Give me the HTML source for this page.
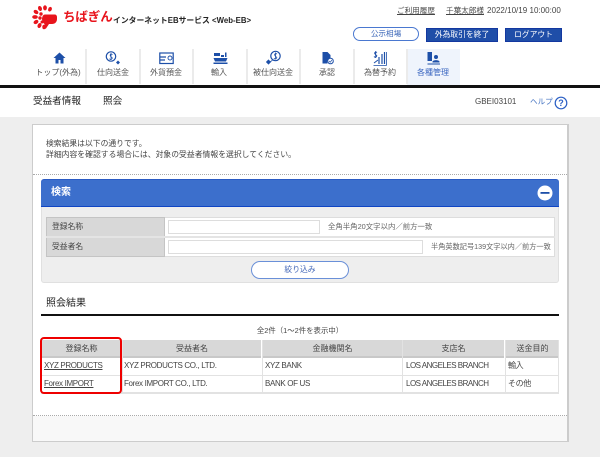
<!DOCTYPE html>
<html lang="ja"><head><meta charset="utf-8"><style>
html,body{margin:0;padding:0}
body{width:600px;height:457px;overflow:hidden;background:#eee;position:relative;font-family:"Liberation Sans","Noto Sans CJK JP",sans-serif;color:#444}
div,span,a,svg{position:absolute;box-sizing:border-box}
#w{left:0;top:0;width:600px;height:457px;filter:blur(.3px);background:#eee}
.t{white-space:nowrap;line-height:12px;font-size:8px}
.c{text-align:center}
.sep{width:2px;top:49px;height:35px;background:#ebebeb}
.nav{top:67px;width:54px;text-align:center;font-size:8px;line-height:12px;white-space:nowrap;color:#555}
.th{background:#d8d8d8;height:18px;top:340px;border-bottom:2px solid #c8c8c8;text-align:center;font-size:8px;line-height:17px;color:#444}
.hl{height:1px;background:#e2e2e2}
.vl{width:1px;background:#e2e2e2}
.td{white-space:nowrap;font-size:8px;line-height:12px;letter-spacing:-.35px;color:#444}
a{color:#2f5f9f;text-decoration:underline}
</style></head><body><div id="w">
<div style="left:0;top:0;width:600px;height:117px;background:#fff"></div>

<svg style="left:32px;top:5px" width="26" height="25" viewBox="0 0 26 25"><g fill="#e8141c"><ellipse cx="8" cy="3.500" rx="1.900" ry="2.600" transform="rotate(-20 8 3.500)"/><ellipse cx="13" cy="2.800" rx="1.900" ry="2.600"/><ellipse cx="4" cy="7" rx="2.600" ry="1.900" transform="rotate(35 4 7)"/><ellipse cx="18" cy="4.200" rx="1.800" ry="2.400" transform="rotate(25 18 4.200)"/><ellipse cx="3" cy="12" rx="2.800" ry="1.900"/><ellipse cx="4" cy="17" rx="2.600" ry="1.900" transform="rotate(-30 4 17)"/><ellipse cx="7.500" cy="20.500" rx="1.900" ry="2.600" transform="rotate(25 7.500 20.500)"/><ellipse cx="12" cy="22" rx="1.700" ry="2.300"/><circle cx="9" cy="9" r="1.700"/><circle cx="8" cy="13" r="1.700"/><circle cx="10" cy="17" r="1.500"/><path d="M13 9.500h9.500c1.500 0 2.500 1 2.500 2.500v2c0 3-2 5-5 5h-3l-3 4.500c-1 .6-1.500 0-1.500-1V19c-1.500-1-2.500-3-2.500-5s1-4.500 3-4.500z"/></g></svg>
<div class="t" style="left:63px;top:9px;font-size:12.500px;line-height:16px;font-weight:700;color:#e8141c;letter-spacing:-.1px">ちばぎん</div>
<div class="t" style="left:113px;top:15px;font-size:7.800px;color:#222;font-weight:700;letter-spacing:.02px">インターネットEBサービス &lt;Web-EB&gt;</div>

<div class="t" style="left:397px;top:5px;font-size:7.600px;text-decoration:underline">ご利用履歴</div>
<div class="t" style="left:446px;top:5px;font-size:7.600px;text-decoration:underline">千葉太郎様</div>
<div class="t" style="left:487px;top:5px;font-size:8px;letter-spacing:.02px">2022/10/19 10:00:00</div>

<div class="t c" style="left:353px;top:27px;width:66px;height:14px;border:1px solid #4a78d0;border-radius:7px;background:#fff;color:#3a66b8;line-height:12px;font-size:7.600px">公示相場</div>
<div class="t c" style="left:426px;top:28px;width:72px;height:14px;background:#1f4ea8;border:1px solid #1338a0;color:#fff;line-height:12px;font-size:7.800px">外為取引を終了</div>
<div class="t c" style="left:505px;top:28px;width:57px;height:14px;background:#1f4ea8;border:1px solid #1338a0;color:#fff;line-height:12px;font-size:7.800px">ログアウト</div>

<div style="left:407px;top:49px;width:53px;height:36px;background:#eff4fc"></div>
<div class="sep" style="left:85px"></div><div class="sep" style="left:139px"></div><div class="sep" style="left:192px"></div><div class="sep" style="left:246px"></div><div class="sep" style="left:299px"></div><div class="sep" style="left:353px"></div><div class="sep" style="left:406px"></div>

<svg style="left:53px;top:52px" width="13" height="12" viewBox="0 0 13 12"><path d="M6.500 .5L.5 6h2v5.500h3V8h2v3.500h3V6h2z" fill="#1d4fa8"/></svg>
<svg style="left:105px;top:50px" width="16" height="16" viewBox="0 0 16 16" fill="none" stroke="#1d4fa8"><circle cx="6" cy="6.500" r="4.700" stroke-width="1.200"/><path d="M7.500 4.500C6 3.600 4.500 4.500 5.500 6.200s2.500 1 1.500 2.500-2.300.5-2.500 0M6 3v7" stroke-width=".8"/><path d="M13 10.500l2 2-2 2-2-2z" fill="#1d4fa8" stroke="none"/></svg>
<svg style="left:159px;top:52px" width="15" height="13" viewBox="0 0 15 13" fill="none" stroke="#1d4fa8" stroke-width="1.200"><rect x=".8" y="1" width="13.400" height="10.500"/><path d="M1 5h6M1 8h5"/><circle cx="11" cy="6" r="2" stroke-width=".9"/></svg>
<svg style="left:213px;top:51px" width="15" height="14" viewBox="0 0 15 14" fill="#1d4fa8"><path d="M1 2h6v3H1zM8 4h3v2H8zM12 1.500h1.500V6H12zM.5 7h14l-1.500 3.500H2zM.5 11.500h14V13H.5z"/></svg>
<svg style="left:266px;top:50px" width="15" height="16" viewBox="0 0 15 16" fill="none" stroke="#1d4fa8"><circle cx="9.500" cy="6" r="4.700" stroke-width="1.200"/><path d="M11 4C9.500 3 8 4 9 5.700s2.500 1 1.500 2.500-2.300.5-2.500 0M9.500 2.500v7" stroke-width=".8"/><path d="M2.500 10l2 2-2 2-2-2zM4 12l2.500-1.800" fill="#1d4fa8" stroke="#1d4fa8" stroke-width=".8"/></svg>
<svg style="left:322px;top:51px" width="12" height="14" viewBox="0 0 12 14"><path d="M.5 1h5l3 3v3a4 4 0 0 0-3 5.500H.5z" fill="#1d4fa8"/><circle cx="8.500" cy="10" r="2.800" fill="#fff" stroke="#1d4fa8"/><path d="M7 10l1.200 1.200L10 9" stroke="#1d4fa8" stroke-width=".7" fill="none"/></svg>
<svg style="left:373px;top:50px" width="14" height="16" viewBox="0 0 14 16" fill="none" stroke="#1d4fa8"><path d="M.5 15.500h13M13.500 15.500V2" stroke-width=".8"/><path d="M6 14V7M9 14V4M11.500 14V2" stroke-width="1.200"/><path d="M1 13l4-3" stroke-width="1"/><path d="M4 2.500C2.500 1.500 1 2.500 2 4s2.500 1 1.500 2.500-2 .5-2.500 0M2.700 1v7" stroke-width=".9"/></svg>
<svg style="left:427px;top:52px" width="13" height="13" viewBox="0 0 13 13" fill="#1d4fa8"><path d="M.5 0h4.500v9H.5z"/><circle cx="9" cy="5" r="2"/><path d="M5.500 9.500c1-1.800 6-1.800 7 0v1H5.500zM.5 11.500h12.500V12.500H.5z"/></svg>

<div class="nav" style="left:31px">トップ(外為)</div>
<div class="nav" style="left:86px">仕向送金</div>
<div class="nav" style="left:139px">外貨預金</div>
<div class="nav" style="left:192px">輸入</div>
<div class="nav" style="left:246px">被仕向送金</div>
<div class="nav" style="left:300px">承認</div>
<div class="nav" style="left:353px">為替予約</div>
<div class="nav" style="left:406px;color:#3a66c0">各種管理</div>

<div style="left:0;top:85px;width:600px;height:2.500px;background:#111"></div>

<div class="t" style="left:33px;top:95px;font-size:9.600px;line-height:14px;color:#222">受益者情報</div>
<div class="t" style="left:103px;top:95px;font-size:9.600px;line-height:14px;color:#222">照会</div>
<div class="t" style="left:475px;top:96px;font-size:8px;color:#444">GBEI03101</div>
<div class="t" style="left:530px;top:96px;font-size:7.600px;color:#4070c0">ヘルプ</div>
<svg style="left:554px;top:96px" width="14" height="14" viewBox="0 0 14 14"><circle cx="7" cy="7" r="5.800" fill="#fff" stroke="#2b5fc4" stroke-width="1.200"/><text x="7" y="10" font-size="9" text-anchor="middle" fill="#2b5fc4" font-family="Liberation Sans" font-weight="700">?</text></svg>

<div style="left:32px;top:124px;width:537px;height:318px;background:#fff;border:1px solid #ccc;border-width:1px 2px 2px 1px"></div>
<div style="left:33px;top:416px;width:534px;height:25px;background:#f8f8f8"></div>
<div style="left:33px;top:415px;width:534px;border-top:1px dotted #aaa"></div>

<div class="t" style="left:46px;top:138px;font-size:7.800px">検索結果は以下の通りです。</div>
<div class="t" style="left:46px;top:149px;font-size:7.800px;letter-spacing:.03px">詳細内容を確認する場合には、対象の受益者情報を選択してください。</div>
<div style="left:33px;top:174px;width:534px;border-top:1px dotted #aaa"></div>

<div style="left:41px;top:179px;width:518px;height:28px;background:#3c6fcc;border-bottom:1.500px solid #0f45c4;border-top:1px solid #2a5ac4;border-radius:3px 3px 0 0"></div>
<div class="t" style="left:51px;top:186px;font-size:10px;line-height:14px;font-weight:700;color:#fff">検索</div>
<svg style="left:537px;top:185px" width="16" height="16" viewBox="0 0 16 16"><circle cx="8" cy="8" r="7.500" fill="#fff"/><rect x="3.500" y="7" width="9" height="1.800" fill="#1d4fa8"/></svg>

<div style="left:41px;top:207px;width:518px;height:76px;background:#eee;border:1px solid #e0e0e0;border-top:0;border-radius:0 0 3px 3px"></div>
<div style="left:46px;top:217px;width:509px;height:40px;background:#fff;border:1px solid #ddd"></div>
<div style="left:46px;top:217px;width:119px;height:40px;background:#d8d8d8;border:1px solid #c4c4c4"></div>
<div class="hl" style="left:46px;top:236px;width:509px;height:1.500px;background:#e4e4e4"></div>
<div class="t" style="left:52px;top:221px;font-size:7.800px">登録名称</div>
<div class="t" style="left:52px;top:241px;font-size:7.800px">受益者名</div>
<div style="left:168px;top:220px;width:152px;height:14px;background:#fff;border:1px solid #ddd"></div>
<div style="left:168px;top:240px;width:255px;height:14px;background:#fff;border:1px solid #ddd"></div>
<div class="t" style="left:328px;top:221px;font-size:7.400px;color:#666">全角半角20文字以内／前方一致</div>
<div class="t" style="left:431px;top:241px;font-size:7.200px;color:#666">半角英数記号139文字以内／前方一致</div>
<div class="t c" style="left:251px;top:261px;width:98px;height:18px;border:1px solid #6a90d8;border-bottom-width:1.500px;border-radius:9px;background:#fff;color:#4468b8;line-height:16px;font-size:7.800px">絞り込み</div>

<div class="t" style="left:46px;top:297px;font-size:10px;line-height:14px;color:#222">照会結果</div>
<div style="left:41px;top:314px;width:518px;height:2px;background:#111"></div>
<div class="t c" style="left:41px;top:325px;width:518px;font-size:7.400px">全2件（1～2件を表示中）</div>

<div class="th" style="left:42px;width:79px">登録名称</div>
<div class="th" style="left:123px;width:138px">受益者名</div>
<div class="th" style="left:263px;width:139px">金融機関名</div>
<div class="th" style="left:403px;width:101px">支店名</div>
<div class="th" style="left:506px;width:53px">送金目的</div>
<div class="hl" style="left:41px;top:375px;width:518px"></div>
<div class="hl" style="left:41px;top:392px;width:518px;height:1.500px"></div>
<div class="vl" style="left:122px;top:340px;height:53px"></div>
<div class="vl" style="left:262px;top:340px;height:53px"></div>
<div class="vl" style="left:402px;top:340px;height:53px"></div>
<div class="vl" style="left:505px;top:340px;height:53px"></div>
<div class="vl" style="left:558px;top:340px;height:53px"></div>

<a class="td" style="left:44px;top:360px">XYZ PRODUCTS</a>
<a class="td" style="left:44px;top:378px">Forex IMPORT</a>
<div class="td" style="left:124px;top:360px">XYZ PRODUCTS CO., LTD.</div>
<div class="td" style="left:124px;top:378px">Forex IMPORT CO., LTD.</div>
<div class="td" style="left:265px;top:360px">XYZ BANK</div>
<div class="td" style="left:265px;top:378px">BANK OF US</div>
<div class="td" style="left:406px;top:360px;letter-spacing:-.5px">LOS ANGELES BRANCH</div>
<div class="td" style="left:406px;top:378px;letter-spacing:-.5px">LOS ANGELES BRANCH</div>
<div class="td" style="left:508px;top:360px">輸入</div>
<div class="td" style="left:508px;top:378px">その他</div>

<div style="left:40px;top:337px;width:81.500px;height:57px;border:2px solid #ee0000;border-radius:4px"></div>
</div></body></html>
